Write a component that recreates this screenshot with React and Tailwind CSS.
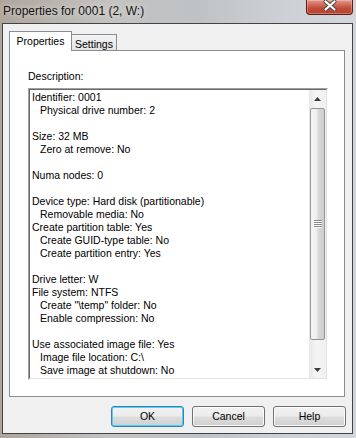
import React from 'react';

const lines = [
  ['Identifier: 0001', 0],
  ['Physical drive number: 2', 1],
  ['', 0],
  ['Size: 32 MB', 0],
  ['Zero at remove: No', 1],
  ['', 0],
  ['Numa nodes: 0', 0],
  ['', 0],
  ['Device type: Hard disk (partitionable)', 0],
  ['Removable media: No', 1],
  ['Create partition table: Yes', 0],
  ['Create GUID-type table: No', 1],
  ['Create partition entry: Yes', 1],
  ['', 0],
  ['Drive letter: W', 0],
  ['File system: NTFS', 0],
  ['Create "\\temp" folder: No', 1],
  ['Enable compression: No', 1],
  ['', 0],
  ['Use associated image file: Yes', 0],
  ['Image file location: C:\\', 1],
  ['Save image at shutdown: No', 1],
];

function Button({ label, primary }) {
  return (
    <div
      className={
        'w-[73px] h-[21px] rounded-[3px] border flex items-center justify-center text-black ' +
        'bg-[linear-gradient(to_bottom,#f2f2f2_0%,#ebebeb_48%,#dddddd_52%,#cfcfcf_100%)] ' +
        (primary
          ? 'border-[#3c7fb1] shadow-[inset_0_0_0_1px_#48d3fb]'
          : 'border-[#707070] shadow-[inset_0_0_0_1px_#fbfbfb]')
      }
    >
      {label}
    </div>
  );
}

function Scrollbar() {
  return (
    <div className="w-[17px] flex flex-col bg-[linear-gradient(to_right,#e8e8e8,#f4f4f4_40%,#f0f0f0)]">
      {/* up arrow */}
      <div className="h-[17px] flex items-center justify-center">
        <svg width="7" height="4" viewBox="0 0 7 4">
          <path d="M3.5 0 L7 4 L0 4 Z" fill="#3c3c3c" />
        </svg>
      </div>
      {/* thumb */}
      <div className="mt-[1px] mx-[1px] h-[232px] rounded-[2px] border border-[#959595] bg-[linear-gradient(to_right,#f6f6f6_0%,#ececec_45%,#d9d9d9_55%,#cdcdcd_100%)] flex items-center justify-center">
        <div className="flex flex-col">
          <div className="w-[8px] h-[2px] border-t border-t-[#8a8a8a] border-b border-b-[#fafafa]" />
          <div className="w-[8px] h-[2px] border-t border-t-[#8a8a8a] border-b border-b-[#fafafa]" />
          <div className="w-[8px] h-[2px] border-t border-t-[#8a8a8a] border-b border-b-[#fafafa]" />
          <div className="w-[8px] h-[2px] border-t border-t-[#8a8a8a] border-b border-b-[#fafafa]" />
        </div>
      </div>
      <div className="flex-1" />
      {/* down arrow */}
      <div className="h-[17px] flex items-center justify-center">
        <svg width="7" height="4" viewBox="0 0 7 4">
          <path d="M0 0 L7 0 L3.5 4 Z" fill="#3c3c3c" />
        </svg>
      </div>
    </div>
  );
}

export default function App() {
  return (
    <div className="w-[356px] h-[438px] flex flex-col font-['Liberation_Sans',Arial,sans-serif] bg-[linear-gradient(to_right,#aea59b_0%,#c3c2c0_30%,#bfc2c5_55%,#cdd1d5_80%,#d3d7db_100%)]">
      {/* title bar */}
      <div className="h-[23px] flex justify-between items-start">
        <span className="pl-[3px] pt-[4px] text-[12px] leading-[14px] text-[#141414] [text-shadow:0_0_6px_rgba(255,255,255,0.8)]">
          Properties for 0001 (2, W:)
        </span>
        <div className="mr-[3px] w-[47px] h-[15px] rounded-b-[4px] border border-t-0 border-[#5b1e18] bg-[linear-gradient(to_bottom,#e29a8c_0%,#d06a5b_35%,#c24a38_60%,#b4442f_100%)] shadow-[inset_0_0_0_1px_rgba(255,220,210,0.35)] flex items-start justify-center">
          <svg width="14" height="11" viewBox="0 0 14 11" className="mt-[0px]">
            <path d="M2.5 1.5 L11.5 9.5 M11.5 1.5 L2.5 9.5" stroke="#4a4a4a" strokeWidth="4" strokeLinecap="round" />
            <path d="M2.5 1.5 L11.5 9.5 M11.5 1.5 L2.5 9.5" stroke="#ffffff" strokeWidth="2.2" strokeLinecap="round" />
          </svg>
        </div>
      </div>

      {/* client area */}
      <div className="flex-1 ml-[2px] mr-[3px] mb-[4px] border border-[#3e444a] bg-[#f0f0f0] flex flex-col text-[10.5px] text-black">
        {/* tab strip */}
        <div className="mt-[7px] ml-[6px] h-[19px] flex items-end">
          <div className="relative z-10 -mb-[1px] w-[63px] h-[20px] border border-b-0 border-[#898c95] bg-white flex justify-center pt-[3px] leading-[13px]">
            Properties
          </div>
          <div className="w-[45px] h-[16px] border-t border-r border-[#898c95] bg-[linear-gradient(to_bottom,#f3f3f3,#e4e4e4)] flex justify-center pt-[3px] leading-[13px]">
            Settings
          </div>
        </div>

        {/* tab page */}
        <div className="ml-[6px] w-[336px] h-[347px] border border-[#898c95] bg-white pl-[18px] pt-[19px]">
          <div className="h-[13px] leading-[13px]">Description:</div>
          <div className="mt-[5px] w-[300px] h-[292px] border border-t-[#a0a0a0] border-l-[#a0a0a0] border-r-white border-b-white">
            <div className="h-full border border-t-[#696969] border-l-[#696969] border-r-[#e3e3e3] border-b-[#e3e3e3] flex">
              <div className="flex-1 pt-[1px] pl-[2px] overflow-hidden">
                {lines.map(([text, indent], i) => (
                  <div
                    key={i}
                    className={'h-[13px] leading-[13px] whitespace-pre ' + (indent ? 'pl-[8px]' : '')}
                  >
                    {text}
                  </div>
                ))}
              </div>
              <Scrollbar />
            </div>
          </div>
        </div>

        {/* buttons */}
        <div className="mt-[9px] pr-[6px] flex justify-end gap-[8px]">
          <Button label="OK" primary />
          <Button label="Cancel" />
          <Button label="Help" />
        </div>
      </div>
    </div>
  );
}
